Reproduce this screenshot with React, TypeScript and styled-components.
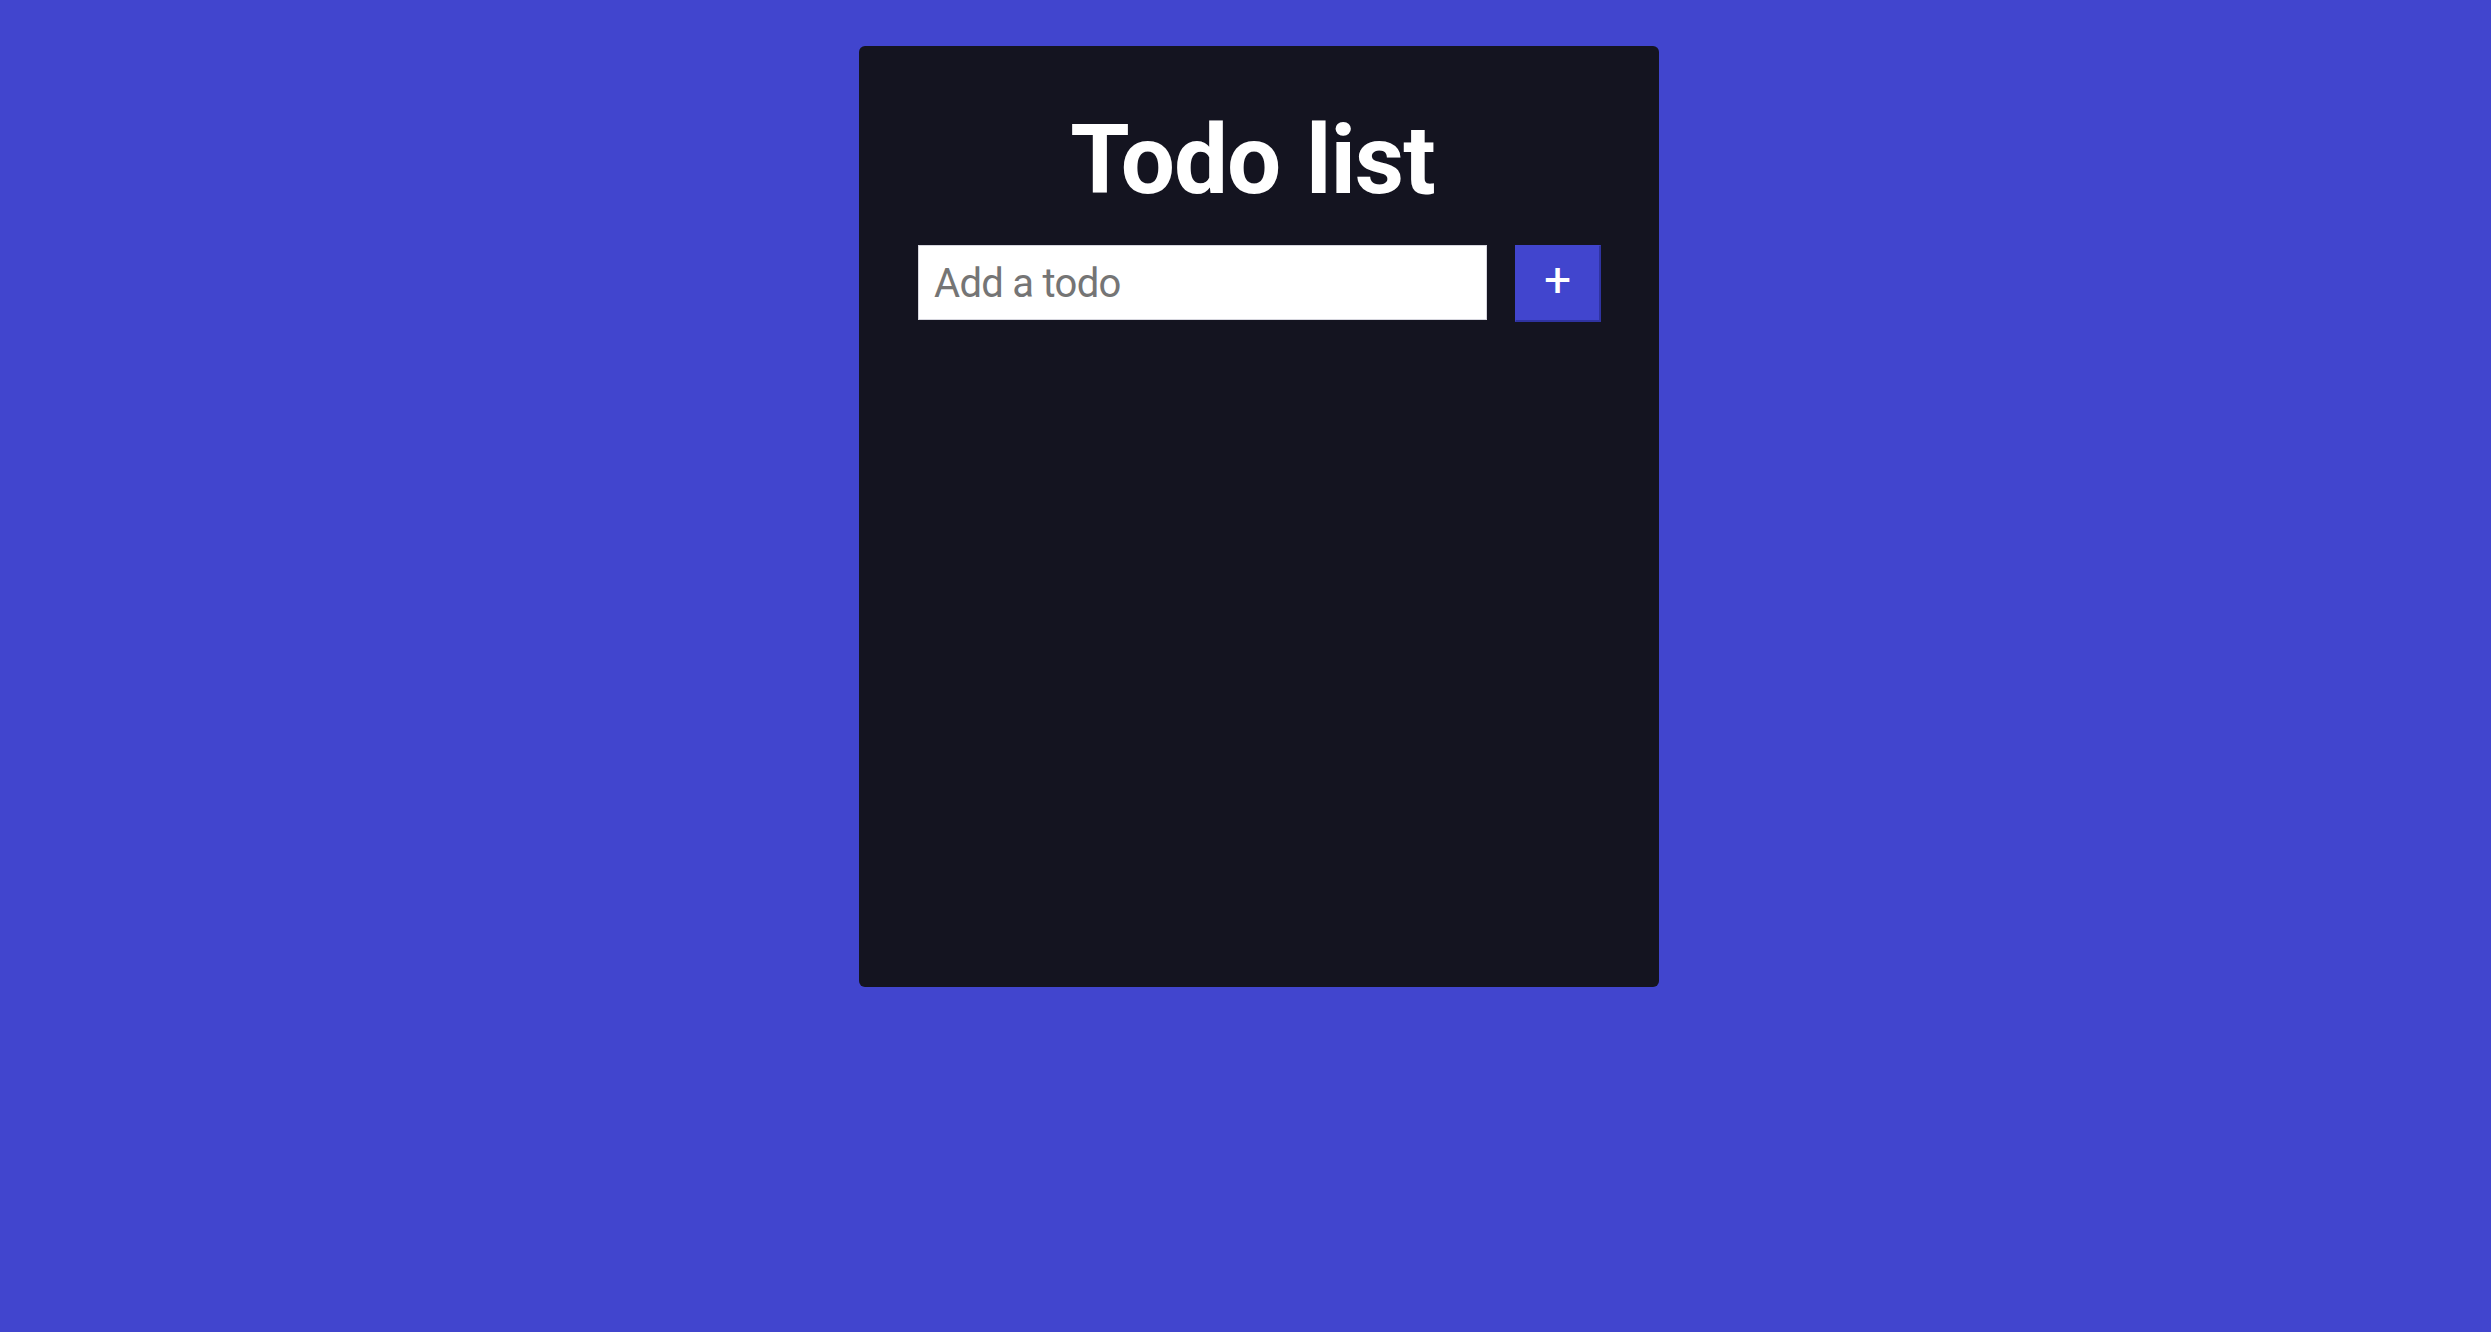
import React from "react";
import styled, { createGlobalStyle } from "styled-components";

const GlobalStyle = createGlobalStyle`
  html, body {
    margin: 0;
    padding: 0;
    background: #4145ce;
    font-family: Roboto, "Liberation Sans", Arial, sans-serif;
  }
  * { box-sizing: border-box; }
`;

const Page = styled.div`
  display: flex;
  justify-content: center;
  align-items: flex-start;
  min-height: 1332px;
  padding: 46px 0 0 27px;
  background: #4145ce;
`;

const Card = styled.div`
  width: 800px;
  height: 941px;
  background: #141420;
  border-radius: 6px;
  padding: 58px 58px 0 59px;
  display: flex;
  flex-direction: column;
`;

const Title = styled.h1`
  margin: 0 0 29px;
  padding-right: 14px;
  color: #ffffff;
  font-family: Roboto, "Liberation Sans", Arial, sans-serif;
  font-weight: 700;
  font-size: 96px;
  line-height: 112px;
  letter-spacing: -1px;
  word-spacing: 3px;
  text-align: center;
`;

const Form = styled.form`
  display: flex;
  align-items: flex-start;
  gap: 28px;
`;

const Input = styled.input`
  flex: 1;
  height: 75px;
  border: 1px solid #d6d6de;
  background: #ffffff;
  padding: 2px 15px 0;
  font-family: Roboto, "Liberation Sans", Arial, sans-serif;
  font-size: 40px;
  letter-spacing: -0.7px;
  color: #222;
  outline: none;
  &::placeholder {
    color: #757575;
  }
`;

const AddButton = styled.button`
  width: 86px;
  height: 77px;
  background: #4145ce;
  color: #ffffff;
  border-style: solid;
  border-color: #4145ce #2f33a0 #2f33a0 #4145ce;
  border-width: 1px 2px 2px 1px;
  display: flex;
  align-items: center;
  justify-content: center;
  padding: 0 0 6px;
  font-family: Roboto, "Liberation Sans", Arial, sans-serif;
  font-size: 48px;
  font-weight: 400;
  line-height: 1;
  cursor: pointer;
`;

export default function App() {
  return (
    <>
      <GlobalStyle />
      <Page>
        <Card>
          <Title>Todo list</Title>
          <Form onSubmit={(e) => e.preventDefault()}>
            <Input placeholder="Add a todo" />
            <AddButton type="submit">+</AddButton>
          </Form>
        </Card>
      </Page>
    </>
  );
}
